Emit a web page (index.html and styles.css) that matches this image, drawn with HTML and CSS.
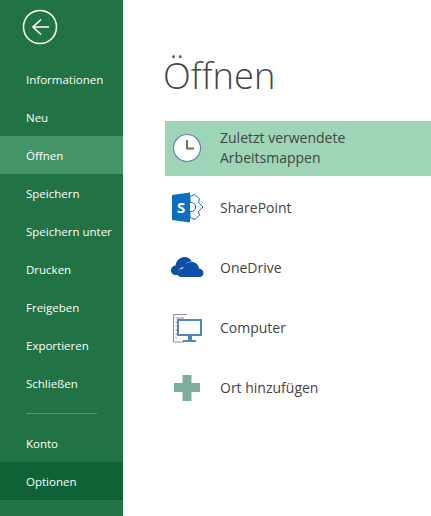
FILE: index.html
```html
<!DOCTYPE html>
<html lang="de">
<head>
    <meta charset="UTF-8">
    <title>Öffnen</title>
    <link rel="stylesheet" href="styles.css">
</head>
<body>
    <div class="sidebar">
        <div class="back">
            <svg width="36" height="36" viewBox="0 0 36 36">
                <circle cx="18" cy="18" r="16.5" fill="none" stroke="#fff" stroke-width="1.5"/>
                <path d="M11 18H27M19 10.500 11 18l8 7.500" fill="none" stroke="#fff" stroke-width="1.6"/>
            </svg>
        </div>
        <div class="nav">
            <div class="nav-item">Informationen</div>
            <div class="nav-item">Neu</div>
            <div class="nav-item active">Öffnen</div>
            <div class="nav-item">Speichern</div>
            <div class="nav-item">Speichern unter</div>
            <div class="nav-item">Drucken</div>
            <div class="nav-item">Freigeben</div>
            <div class="nav-item">Exportieren</div>
            <div class="nav-item">Schließen</div>
            <div class="divider"></div>
            <div class="nav-item">Konto</div>
            <div class="nav-item hover">Optionen</div>
        </div>
    </div>
    <div class="main">
        <h1>Öffnen</h1>
        <div class="places">
            <div class="place selected">
                <svg class="icon" width="32" height="32" viewBox="0 0 32 32">
                    <circle cx="15" cy="15" r="13.500" fill="#fff" stroke="#5b86bd" stroke-width="1.2"/>
                    <path d="M15 7V15.500H22" fill="none" stroke="#707070" stroke-width="2"/>
                </svg>
                <span>Zuletzt verwendete<br>Arbeitsmappen</span>
            </div>
            <div class="place">
                <svg class="icon" width="32" height="32" viewBox="0 0 32 32">
                    <path d="M18 5.500 23 3.500 27.500 8 26.500 11.500 31 16 26.500 20.500 27.500 24 23 28.500 18 26.500Z" fill="#fff" stroke="#0a6fc0" stroke-width="1"/>
                    <path d="M18 11.500C21 11 23.500 13 23.500 16S21 21 18 20.500" fill="#fff" stroke="#0a6fc0" stroke-width="1"/>
                    <path d="M0 4 18 1.500V31.500L0 29Z" fill="#0a6fc0"/>
                    <text x="5" y="21.500" class="sp-letter">S</text>
                </svg>
                <span>SharePoint</span>
            </div>
            <div class="place">
                <svg class="icon" width="32" height="32" viewBox="0 0 32 32">
                    <path d="M-1 19.500C-1 16.500 1 14.800 3.500 14.500 4 10 8 6 12.500 6c3.500 0 6 1.800 7.500 4.500-3.500 0-6.500 2-7.500 5.500-3.500 0-6.500 2.500-6.500 6.500 0 .5 0 1 .2 1.500H3C.5 23.500-1 22-1 19.500Z" fill="#0b4fa8"/>
                    <path d="M8.500 26C6.500 25.500 5.500 24 5.500 22.500 5.500 19.800 8 17.500 11 17.500 12 13.500 15.500 11 19.500 11c4 0 7 2.500 7.500 6.500 2.500.2 4.500 2 4.500 4.500 0 2.500-2 4-4 4Z" fill="#0b4fa8"/>
                </svg>
                <span>OneDrive</span>
            </div>
            <div class="place">
                <svg class="icon" width="32" height="32" viewBox="0 0 32 32">
                    <path d="M15 3.500H1.500V31H12M3.500 7H12M3.500 11H5M3.500 15H5M3.500 19H5M3.500 23H5M3.500 27H5" fill="none" stroke="#8c8c8c" stroke-width="1"/>
                    <rect x="6" y="9" width="23" height="15" fill="#fff" stroke="#4f86c0" stroke-width="2"/>
                    <path d="M16 25H20V29H24V31H11V29H16Z" fill="#4f86c0"/>
                </svg>
                <span>Computer</span>
            </div>
            <div class="place">
                <svg class="icon" width="32" height="32" viewBox="0 0 32 32">
                    <path d="M10.500 4H19.500V12H28V21H19.500V30H10.500V21H2V12H10.500Z" fill="#7fad9b"/>
                </svg>
                <span>Ort hinzufügen</span>
            </div>
        </div>
    </div>
</body>
</html>
```
FILE: styles.css
```css
html, body {
    height: 100%;
}
body {
    margin: 0;
    display: flex;
    overflow: hidden;
    background: #fff;
    font-family: "Open Sans", "Noto Sans", Arial, sans-serif;
}
.sidebar {
    width: 123px;
    flex-shrink: 0;
    background: #217346;
    color: #fff;
    font-size: 11.5px;
}
.back {
    height: 60px;
    padding: 9px 0 0 22px;
    box-sizing: border-box;
}
.nav-item {
    height: 38px;
    line-height: 40px;
    padding-left: 26px;
    white-space: nowrap;
}
.nav-item.active {
    background: #439467;
}
.nav-item.hover {
    background: #0e6235;
}
.divider {
    height: 1px;
    width: 71px;
    margin: 11px 0 10px 26px;
    background: #4c9a6d;
}
.main {
    flex: 1;
    min-width: 0;
    padding-left: 42px;
}
h1 {
    margin: 0 0 0 -2px;
    padding-top: 47px;
    height: 74px;
    font-size: 36.3px;
    line-height: 56px;
    font-weight: 300;
    color: #444;
}
.places {
    color: #444;
    font-size: 14px;
    line-height: 20px;
}
.place {
    display: flex;
    align-items: center;
    height: 60px;
    padding-left: 7px;
}
.place span {
    padding-top: 2px;
}
.place.selected {
    height: 55px;
    background: #9fd5b7;
    margin-bottom: 1px;
}
.place.selected span {
    padding: 0 0 2px;
}
.place.selected .icon {
    margin-top: 1px;
}
.icon {
    flex-shrink: 0;
    margin-right: 16px;
    overflow: visible;
}
.sp-letter {
    font-family: "Open Sans", Arial, sans-serif;
    font-size: 15px;
    font-weight: 700;
    fill: #fff;
}
```
